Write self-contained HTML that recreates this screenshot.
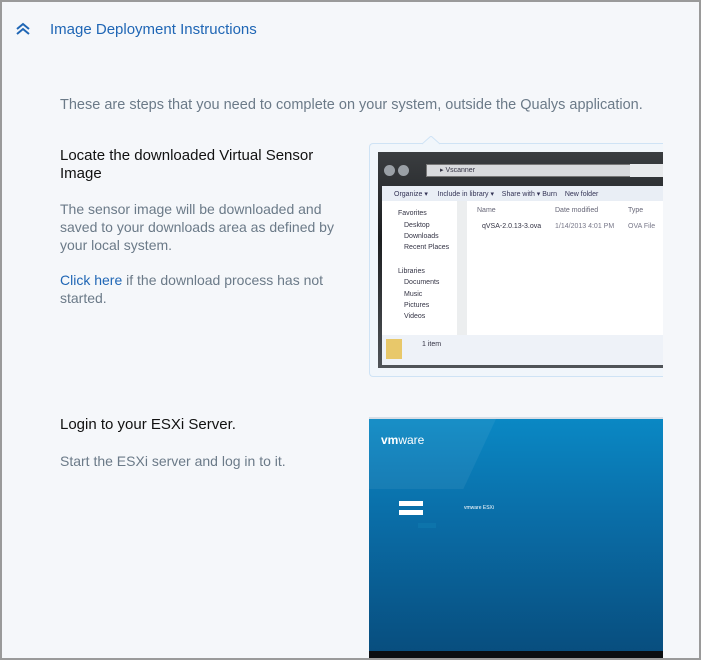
<!DOCTYPE html>
<html><head><meta charset="utf-8"><style>
*{margin:0;padding:0;box-sizing:border-box}
body{width:701px;height:660px;overflow:hidden;background:#f5f7fa;font-family:"Liberation Sans",Arial,sans-serif;position:relative}
.frame{position:absolute;left:0;top:0;width:701px;height:660px;border:2px solid #9a9a9a}
.hdr{position:absolute;left:50px;top:21px;font-size:15px;color:#1f66b5}
.chev{position:absolute;left:15px;top:22px}
.a{position:absolute;font-size:14px;line-height:18px;color:#6b7a88}
.t{position:absolute;font-size:15px;line-height:18px;color:#111}
.lnk{color:#1f66b5}
.card{position:absolute;left:369px;top:143px;width:294px;height:234px;border:1px solid #cfe3f5;border-right:none;border-radius:4px 0 0 4px;background:#f1f6fb}
.win{position:absolute;left:378px;top:152px;width:285px;height:216px;background:linear-gradient(#3a3d40,#1c1e20 40%,#505458);overflow:hidden}
.abs{position:absolute}
.s{font-size:7px;color:#334;position:absolute;white-space:nowrap}
.vm{position:absolute;left:369px;top:417px;width:294px;height:243px;background:linear-gradient(#0a88c4,#0a6ea8 40%,#084c7c 100%);border-top:2px solid #d8dee6;overflow:hidden}
</style></head><body>
<svg class="chev" width="16" height="14" viewBox="0 0 16 14"><path d="M2 7L8 2L14 7M2 12L8 7L14 12" fill="none" stroke="#1f66b5" stroke-width="2"/></svg>
<div class="hdr">Image Deployment Instructions</div>
<div class="a" style="left:60px;top:96px;font-size:14.5px;white-space:nowrap">These are steps that you need to complete on your system, outside the Qualys application.</div>
<div class="t" style="left:60px;top:147px;width:290px">Locate the downloaded Virtual Sensor Image</div>
<div class="a" style="left:60px;top:200px;width:300px">The sensor image will be downloaded and saved to your downloads area as defined by your local system.</div>
<div class="a" style="left:60px;top:271px;width:300px"><span class="lnk">Click here</span> if the download process has not started.</div>
<div class="t" style="left:60px;top:416px">Login to your ESXi Server.</div>
<div class="a" style="left:60px;top:452px">Start the ESXi server and log in to it.</div>

<div class="card"></div>
<svg class="abs" style="left:422px;top:136px" width="18" height="9"><path d="M0 8L9 0L18 8" fill="#f1f6fb" stroke="#cfe3f5"/></svg>
<div class="win">
 <div class="abs" style="left:6px;top:13px;width:11px;height:11px;border-radius:50%;background:#9aa0a6"></div>
 <div class="abs" style="left:20px;top:13px;width:11px;height:11px;border-radius:50%;background:#9aa0a6"></div>
 <div class="abs" style="left:48px;top:12px;width:212px;height:13px;background:#d8dadd;border:1px solid #777"></div>
 <div class="s" style="left:62px;top:14px">▸ Vscanner</div>
 <div class="abs" style="left:252px;top:12px;width:40px;height:13px;background:#e8eaec"></div>
 <div class="abs" style="left:4px;top:34px;width:281px;height:15px;background:#e9eef5"></div>
 <div class="s" style="left:16px;top:38px;color:#335">Organize ▾ &nbsp;&nbsp;&nbsp; Include in library ▾ &nbsp;&nbsp; Share with ▾ Burn &nbsp;&nbsp; New folder</div>
 <div class="abs" style="left:4px;top:49px;width:75px;height:134px;background:#fff"></div>
 <div class="abs" style="left:79px;top:49px;width:10px;height:134px;background:#eceeef"></div>
 <div class="abs" style="left:89px;top:49px;width:196px;height:134px;background:#fff"></div>
 <div class="s" style="left:20px;top:58px">Favorites</div>
 <div class="s" style="left:26px;top:70px">Desktop</div>
 <div class="s" style="left:26px;top:81px">Downloads</div>
 <div class="s" style="left:26px;top:92px">Recent Places</div>
 <div class="s" style="left:20px;top:116px">Libraries</div>
 <div class="s" style="left:26px;top:127px">Documents</div>
 <div class="s" style="left:26px;top:139px">Music</div>
 <div class="s" style="left:26px;top:150px">Pictures</div>
 <div class="s" style="left:26px;top:161px">Videos</div>
 <div class="s" style="left:99px;top:55px;color:#667">Name</div>
 <div class="s" style="left:177px;top:55px;color:#667">Date modified</div>
 <div class="s" style="left:250px;top:55px;color:#667">Type</div>
 <div class="s" style="left:104px;top:71px">qVSA-2.0.13-3.ova</div>
 <div class="s" style="left:177px;top:71px;color:#778">1/14/2013 4:01 PM</div>
 <div class="s" style="left:250px;top:71px;color:#778">OVA File</div>
 <div class="abs" style="left:4px;top:183px;width:281px;height:30px;background:#eef2f8"></div>
 <div class="abs" style="left:8px;top:187px;width:16px;height:20px;background:#e8c86a"></div>
 <div class="s" style="left:44px;top:189px">1 item</div>
</div>

<div class="vm">
 <div class="abs" style="left:-20px;top:-40px;width:140px;height:110px;background:rgba(255,255,255,0.06);transform:skewX(-25deg)"></div>
 <div class="abs" style="left:12px;top:14px;color:#fff;font-size:12px;font-weight:bold">vm<span style="font-weight:normal">ware</span></div>
 <div class="abs" style="left:30px;top:82px;width:24px;height:5px;background:#fff"></div>
 <div class="abs" style="left:30px;top:91px;width:24px;height:5px;background:#fff"></div>
 <div class="abs" style="left:49px;top:104px;width:18px;height:5px;background:#0d74ab"></div>
 <div class="abs" style="left:95px;top:86px;color:#fff;font-size:5px">vmware ESXi</div>
 <div class="abs" style="left:0;top:232px;width:294px;height:11px;background:#0b0d10"></div>
</div>
<div class="frame"></div>
</body></html>
